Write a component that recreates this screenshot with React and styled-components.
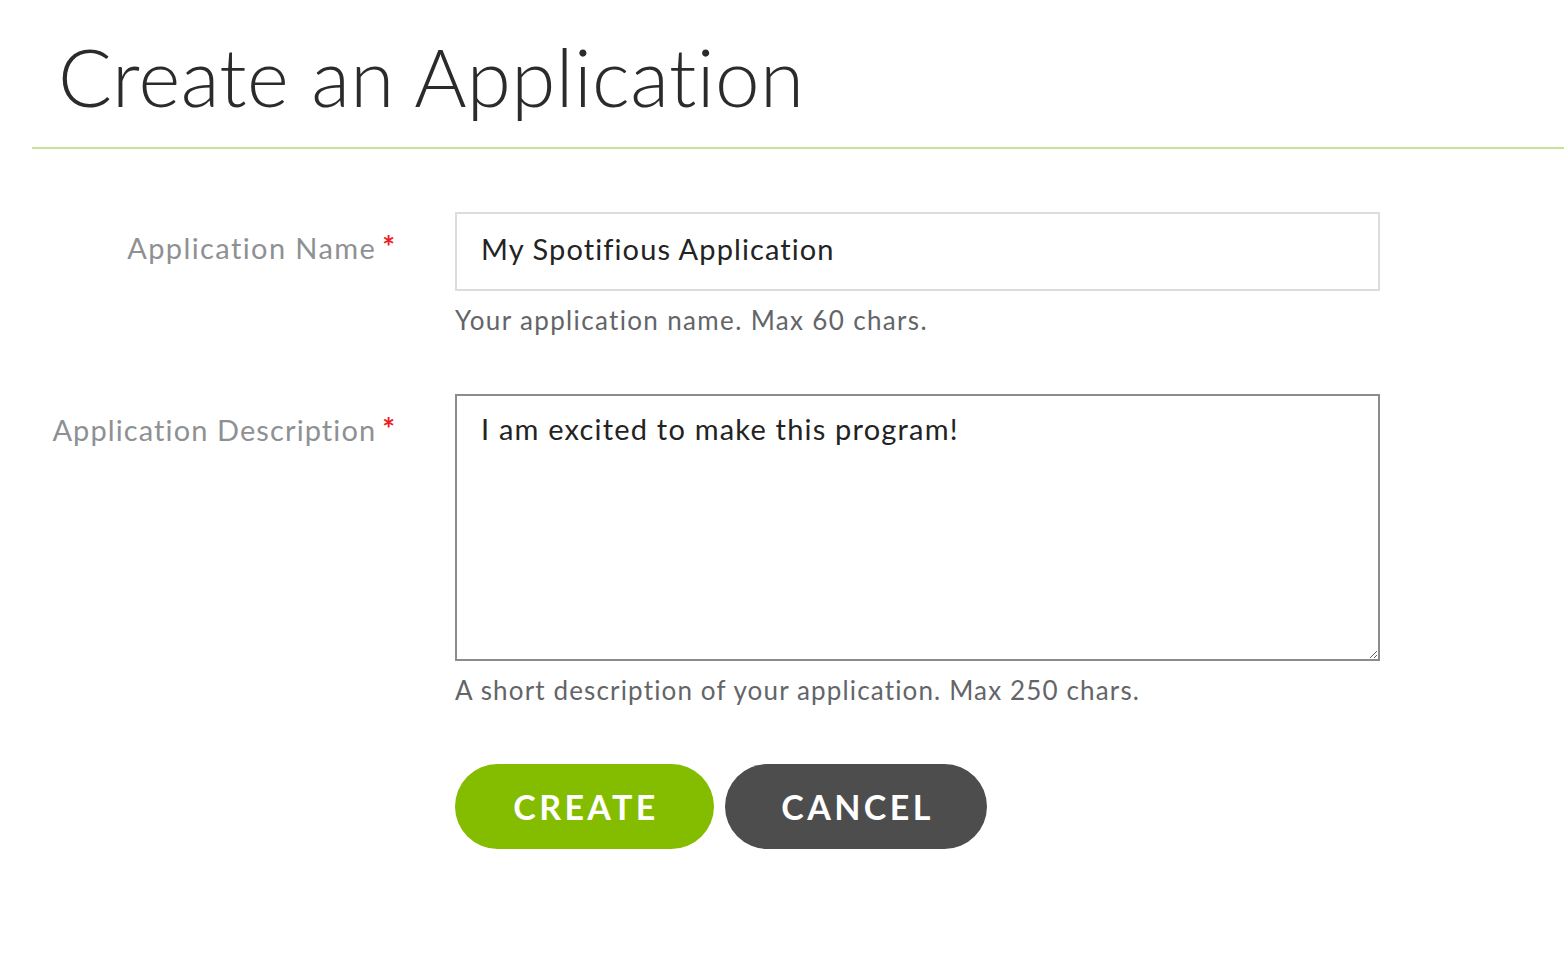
import styled, { createGlobalStyle } from "styled-components"

const Global = createGlobalStyle`
    body {
        margin: 0;
        background: #fff;
        font-family: Lato, "Open Sans", sans-serif;
    }
`

const Page = styled.div`
    width: 1564px;
    padding-bottom: 100px;
`

const Header = styled.div`
    margin-left: 32px;
    padding: 26px 0 21px 26px;
    border-bottom: 2px solid #c9e395;
`

const Title = styled.h1`
    margin: 0;
    font-weight: 300;
    font-size: 80px;
    line-height: 100px;
    color: #2b2b2b;
    letter-spacing: 0.4px;
`

const Form = styled.form`
    display: grid;
    grid-template-columns: 363px 925px;
    column-gap: 60px;
    margin: 63px 0 0 32px;
`

const Label = styled.label`
    text-align: right;
    font-size: 29px;
    line-height: 34px;
    letter-spacing: ${p => p.$ls}px;
    color: #8e9194;
    padding-top: ${p => p.$top}px;
`

const Star = styled.span`
    color: #ee1c25;
    font-size: 30px;
    font-weight: 700;
    margin-left: 6px;
    letter-spacing: 0;
    vertical-align: 1px;
`

const Field = styled.div`
    display: flex;
    flex-direction: column;
    margin-bottom: ${p => p.$after}px;
`

const Input = styled.input`
    box-sizing: border-box;
    width: 925px;
    height: 79px;
    border: 2px solid #dcdcdc;
    padding: 0 24px 6px;
    font-family: inherit;
    font-size: 29px;
    letter-spacing: 1.1px;
    color: #232323;
    outline: none;
`

const TextArea = styled.textarea`
    box-sizing: border-box;
    width: 925px;
    height: 267px;
    border: 2px solid #8a8c8e;
    padding: 13px 24px;
    font-family: inherit;
    font-size: 29px;
    line-height: 40px;
    letter-spacing: 1.2px;
    color: #232323;
    resize: vertical;
    outline: none;
`

const Help = styled.div`
    margin-top: 13px;
    font-size: 26px;
    line-height: 32px;
    letter-spacing: ${p => p.$ls}px;
    color: #636569;
`

const Buttons = styled.div`
    grid-column: 2;
    display: flex;
    gap: 11px;
`

const Btn = styled.button`
    height: 85px;
    width: ${p => p.$w}px;
    border: none;
    border-radius: 43px;
    background: ${p => p.$bg};
    color: #fff;
    font-family: inherit;
    font-weight: 700;
    font-size: 34px;
    letter-spacing: 3.4px;
    padding: 0 0 0 3px;
    cursor: pointer;
`

export default function App() {
    return <Page>
        <Global />
        <Header>
            <Title>Create an Application</Title>
        </Header>
        <Form onSubmit={e => e.preventDefault()}>
            <Label $top={17} $ls={1.4}>Application Name<Star>*</Star></Label>
            <Field $after={58}>
                <Input defaultValue="My Spotifious Application" />
                <Help $ls={1.35}>Your application name. Max 60 chars.</Help>
            </Field>

            <Label $top={17} $ls={1.1}>Application Description<Star>*</Star></Label>
            <Field $after={58}>
                <TextArea defaultValue="I am excited to make this program!" />
                <Help $ls={1.15}>A short description of your application. Max 250 chars.</Help>
            </Field>

            <Buttons>
                <Btn $w={259} $bg="#84bd00">CREATE</Btn>
                <Btn $w={262} $bg="#4d4d4d">CANCEL</Btn>
            </Buttons>
        </Form>
    </Page>
}
